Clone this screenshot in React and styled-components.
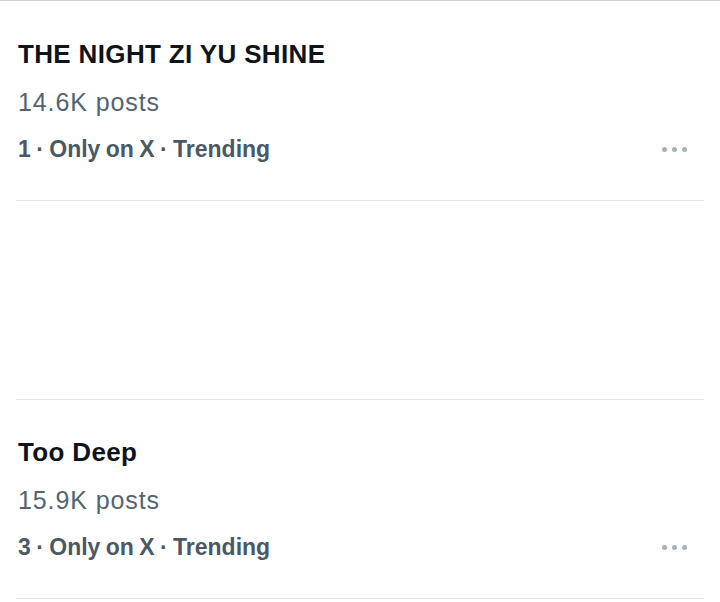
import styled, { createGlobalStyle } from "styled-components";

const GlobalStyle = createGlobalStyle`
  html, body {
    margin: 0;
    padding: 0;
    background: #ffffff;
  }
  body {
    font-family: "Liberation Sans", Arial, sans-serif;
  }
`;

const Page = styled.div`
  width: 720px;
  height: 602px;
  background: #ffffff;
  border-top: 1px solid #cfd3d5;
  box-sizing: border-box;
  overflow: hidden;
`;

const List = styled.ul`
  list-style: none;
  margin: 0;
  padding: 0 16px;
`;

const Row = styled.li`
  display: flex;
  align-items: flex-end;
  justify-content: space-between;
  height: ${(p) => p.$height}px;
  box-sizing: border-box;
  padding: 39px 17px 37px 2px;
  border-bottom: 1px solid #e3e5e6;
`;

const Body = styled.div`
  display: flex;
  flex-direction: column;
  gap: 19px;
`;

const Title = styled.div`
  font-size: 26px;
  line-height: 30px;
  font-weight: 700;
  letter-spacing: 0.35px;
  color: #0f1419;
`;

const Posts = styled.div`
  font-size: 25px;
  line-height: 28px;
  letter-spacing: 0.9px;
  color: #536471;
`;

const Meta = styled.div`
  font-size: 23px;
  line-height: 28px;
  font-weight: 700;
  word-spacing: -1px;
  color: #4a5963;
`;

const More = styled.div`
  display: flex;
  gap: 5px;
  height: 28px;
  align-items: center;
`;

const Dot = styled.span`
  width: 5px;
  height: 5px;
  border-radius: 50%;
  background: #a3b3b8;
`;

const trends = [
  { rank: 1, name: "THE NIGHT ZI YU SHINE", posts: "14.6K" },
  null,
  { rank: 3, name: "Too Deep", posts: "15.9K" },
];

export default function App() {
  return (
    <>
      <GlobalStyle />
      <Page>
        <List>
          {trends.map((t, i) =>
            t ? (
              <Row key={i} $height={i === 0 ? 200 : 199}>
                <Body>
                  <Title>{t.name}</Title>
                  <Posts>{t.posts} posts</Posts>
                  <Meta>{t.rank} · Only on X · Trending</Meta>
                </Body>
                <More>
                  <Dot />
                  <Dot />
                  <Dot />
                </More>
              </Row>
            ) : (
              <Row key={i} $height={199} />
            )
          )}
        </List>
      </Page>
    </>
  );
}
